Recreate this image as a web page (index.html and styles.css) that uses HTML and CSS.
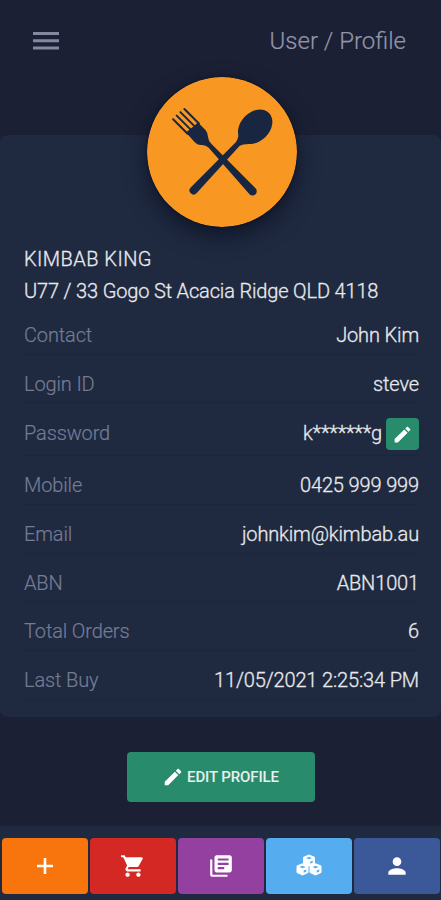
FILE: index.html
```html
<!DOCTYPE html>
<html lang="en">
<head>
<meta charset="utf-8">
<title>User / Profile</title>
<link rel="stylesheet" href="styles.css">
</head>
<body>
<div class="app">
  <header class="topbar">
    <svg class="menu" viewBox="0 0 26 18"><path d="M0 0h26v3H0zM0 7.3h26v3H0zM0 14.6h26v3H0z"/></svg>
    <h1 class="title">User / Profile</h1>
  </header>
  <main class="card">
    <svg class="avatar" viewBox="0 0 150 150">
      <circle cx="75" cy="75" r="75" fill="#f89721"/>
      <g fill="none" stroke="#192642" stroke-linecap="round" stroke-width="2">
        <path d="M26.100 42.200l14.500 14.500M29.700 38.600l14.500 14.500M33.400 35.100l14.500 14.500M37.400 32l14.500 14.500"/>
      </g>
      <g fill="#192642">
        <path d="M39 55.500L51 45.500L58.500 53Q61 56 61 60Q61.300 63.500 64.500 67L108.500 111.200A4.200 4.200 0 0 1 102.500 117.200L61.500 70.500Q58.500 67.600 54 68Q50.500 68 48 65.500Z"/>
        <ellipse cx="108.200" cy="49.700" rx="19.500" ry="14.500" transform="rotate(-45 108.200 49.700)"/>
        <path d="M91.500 52Q92.500 60 89 65L43.700 110.500A4 4 0 0 0 49.500 116.200L92.500 69Q96 66.500 105 67Z"/>
      </g>
    </svg>
    <h2 class="name">KIMBAB KING</h2>
    <p class="address">U77 / 33 Gogo St Acacia Ridge QLD 4118</p>
    <dl class="details">
      <div class="row"><dt>Contact</dt><dd>John Kim</dd></div>
      <div class="row"><dt>Login ID</dt><dd>steve</dd></div>
      <div class="row row-password"><dt>Password</dt><dd><span>k*******g</span><button class="edit" aria-label="Edit password"><svg viewBox="0 0 24 24"><path d="M3 17.250V21h3.750L17.810 9.940l-3.750-3.750L3 17.250zM20.710 7.040a1 1 0 0 0 0-1.410l-2.340-2.340a1 1 0 0 0-1.410 0l-1.830 1.830 3.750 3.750z"/></svg></button></dd></div>
      <div class="row"><dt>Mobile</dt><dd>0425 999 999</dd></div>
      <div class="row"><dt>Email</dt><dd>johnkim@kimbab.au</dd></div>
      <div class="row"><dt>ABN</dt><dd>ABN1001</dd></div>
      <div class="row"><dt>Total Orders</dt><dd>6</dd></div>
      <div class="row"><dt>Last Buy</dt><dd>11/05/2021 2:25:34 PM</dd></div>
    </dl>
  </main>
  <button class="edit-profile"><svg viewBox="0 0 24 24"><path d="M3 17.250V21h3.750L17.810 9.940l-3.750-3.750L3 17.250zM20.710 7.040a1 1 0 0 0 0-1.410l-2.340-2.340a1 1 0 0 0-1.410 0l-1.830 1.830 3.750 3.750z"/></svg><span>EDIT PROFILE</span></button>
  <nav class="tabs">
    <a class="tab orange"><svg viewBox="0 0 24 24"><path d="M19.400 13.200h-6.200v6.200h-2.400v-6.200H4.600v-2.400h6.200V4.600h2.400v6.200h6.200z"/></svg></a>
    <a class="tab red"><svg viewBox="0 0 24 24"><path d="M7 18c-1.100 0-1.990.9-1.990 2S5.900 22 7 22s2-.9 2-2-.9-2-2-2zM1 2v2h2l3.600 7.590-1.350 2.450c-.16.28-.25.61-.25.96 0 1.100.9 2 2 2h12v-2H7.420c-.14 0-.25-.11-.25-.25l.03-.12.900-1.630h7.450c.75 0 1.410-.41 1.750-1.030l3.580-6.490A1 1 0 0 0 20 4H5.210l-.94-2H1zm16 16c-1.100 0-1.990.9-1.990 2s.89 2 1.990 2 2-.9 2-2-.9-2-2-2z"/></svg></a>
    <a class="tab purple"><svg viewBox="0 0 24 24"><path d="M4 6H2v14c0 1.100.9 2 2 2h14v-2H4V6zm16-4H8c-1.100 0-2 .9-2 2v12c0 1.100.9 2 2 2h12c1.100 0 2-.9 2-2V4c0-1.100-.9-2-2-2zm-1 9H9V9h10v2zm-4 4H9v-2h6v2zm4-8H9V5h10v2z"/></svg></a>
    <a class="tab sky"><svg class="cubes" viewBox="0 0 26 22">
      <path d="M13 .5l5 2q1 .4 1 1.500v5q0 1-1 1.500l-5 2-5-2q-1-.5-1-1.500V4q0-1.100 1-1.500z"/>
      <path d="M6.500 9.300l5 2q1 .4 1 1.500v5q0 1-1 1.500l-5 2.200-5-2.200q-1-.5-1-1.500v-5q0-1.100 1-1.500z"/>
      <path d="M19.500 9.300l5 2q1 .4 1 1.500v5q0 1-1 1.500l-5 2.200-5-2.200q-1-.5-1-1.500v-5q0-1.100 1-1.500z"/>
      <path class="cut" d="M10 4L13 2.900 16 4 13 5.200zM14.200 7.700l2.600-1.100v2l-2.600 1.100zM3.500 13l3-1.200 3 1.200-3 1.200zM7.700 16.600l2.600-1.100v2.100l-2.600 1.200zM16.500 13l3-1.200 3 1.200-3 1.200zM20.700 16.600l2.600-1.100v2.100l-2.600 1.200z"/>
    </svg></a>
    <a class="tab blue"><svg viewBox="0 0 24 24"><path d="M12 12c2.210 0 4-1.790 4-4s-1.790-4-4-4-4 1.790-4 4 1.790 4 4 4zm0 2c-2.670 0-8 1.340-8 4v2h16v-2c0-2.660-5.330-4-8-4z"/></svg></a>
  </nav>
</div>
</body>
</html>
```
FILE: styles.css
```css
* { box-sizing: border-box; margin: 0; padding: 0; }
body { background: #1b2035; font-family: Roboto, "Liberation Sans", sans-serif; color: #e8e9ec; }
.app { display: flex; flex-direction: column; width: 441px; height: 900px; overflow: hidden; }
.topbar { display: flex; flex: 0 0 135px; align-items: flex-start; justify-content: space-between; padding: 25px 35px 0 33px; }
.menu { width: 26px; height: 18px; margin-top: 7px; fill: #8588a2; }
.title { font-size: 24px; font-weight: 300; line-height: 32px; color: #9296aa; -webkit-text-stroke: .2px; }
.card { display: flex; flex: 0 0 582px; flex-direction: column; padding: 0 22px 0 24px; border-radius: 8px; background: #1f2940; }
.avatar { width: 150px; height: 150px; margin: -58px 0 0 123px; border-radius: 50%; box-shadow: 0 9px 22px rgba(8, 12, 28, .65), 0 0 3px #10162a; }
.name { margin-top: 15.5px; font-size: 20px; font-weight: 300; line-height: 32px; letter-spacing: .45px; -webkit-text-stroke: .3px; }
.address { font-size: 20px; font-weight: 300; line-height: 32px; letter-spacing: -.16px; white-space: nowrap; -webkit-text-stroke: .3px; }
.row { display: flex; align-items: center; justify-content: space-between; height: 48.7px; padding-top: 10px; border-bottom: 1px solid #1d253c; font-size: 20px; font-weight: 300; letter-spacing: -.14px; white-space: nowrap; }
.details { margin-top: -.5px; }
.row-password { height: 53px; }
.row-password dt, .row-password span { padding-bottom: 2px; }
.row dt { color: #747c94; -webkit-text-stroke: .2px; }
.row dd { display: flex; align-items: center; -webkit-text-stroke: .3px; }
.edit { display: flex; align-items: center; justify-content: center; width: 33px; height: 32px; margin-left: 4px; border: 0; border-radius: 4px; background: #288c6c; }
.edit svg { width: 21px; height: 21px; margin-right: 1px; fill: #fff; }
.edit-profile { display: flex; flex: 0 0 50px; align-items: center; align-self: center; justify-content: center; width: 188px; margin: 35px 0 0; padding-bottom: 1px; border: 0; border-radius: 4px; background: #288c6c; color: #e8f1ef; font: 500 15px Roboto, "Liberation Sans", sans-serif; letter-spacing: -.12px; }
.edit-profile svg { width: 22px; height: 22px; margin-right: 3px; fill: #fff; }
.tabs { display: grid; flex: 1; grid-template-columns: repeat(5, 1fr); gap: 2px; align-items: start; margin-top: 24px; padding: 11.5px 1px 0 2px; background: #1f2940; }
.tab { display: flex; align-items: center; justify-content: center; height: 56px; border-radius: 4px; }
.tab svg { width: 26px; height: 26px; fill: #fff; }
.tab .cubes { width: 26px; height: 22px; margin-top: -2px; }
.orange { background: #f8740c; }
.red { background: #d32824; }
.purple { background: #9340a0; }
.sky { background: #55acee; }
.blue { background: #3b5998; }
.cubes .cut { fill: #55acee; }
```
